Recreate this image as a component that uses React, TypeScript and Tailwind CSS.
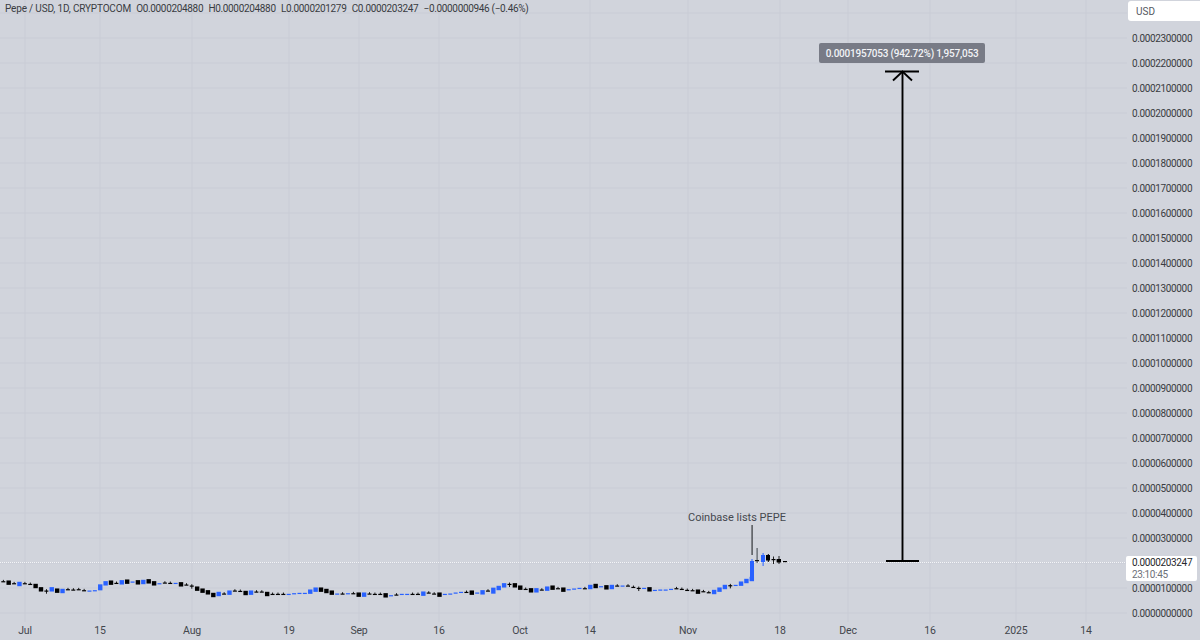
const ticks = [
  { x: 25, label: 'Jul' },
  { x: 100, label: '15' },
  { x: 192, label: 'Aug' },
  { x: 289, label: '19' },
  { x: 359, label: 'Sep' },
  { x: 439, label: '16' },
  { x: 520, label: 'Oct' },
  { x: 590, label: '14' },
  { x: 688, label: 'Nov' },
  { x: 780, label: '18' },
  { x: 848, label: 'Dec' },
  { x: 930, label: '16' },
  { x: 1016, label: '2025' },
  { x: 1086, label: '14' },
];

const prices = Array.from({ length: 24 }, (_, i) => `0.000${String((23 - i) * 100000).padStart(7, '0')}`);

// y in 3x crop units from y=560, K/B = solid square, k/b = thin dash
const series: [number, string][] = [
  [65, 'k'], [68, 'K'], [71, 'k'], [72, 'B'], [71, 'k'], [73, 'k'], [78, 'K'], [88, 'K'], [93, 'w'], [88, 'B'],
  [92, 'K'], [93, 'B'], [89, 'k'], [90, 'k'], [89, 'k'], [92, 'k'], [93, 'b'], [92, 'b'], [82, 'T'], [70, 'B'],
  [68, 'K'], [70, 'k'], [67, 'B'], [65, 'K'], [66, 'b'], [67, 'K'], [66, 'B'], [64, 'K'], [70, 'K'], [71, 'b'],
  [69, 'k'], [70, 'k'], [70, 'b'], [73, 'K'], [75, 'k'], [78, 'w'], [86, 'K'], [92, 'K'], [97, 'K'], [105, 'K'],
  [102, 'B'], [102, 'k'], [98, 'B'], [93, 'k'], [94, 'k'], [99, 'K'], [98, 'B'], [96, 'k'], [96, 'k'], [102, 'K'],
  [103, 'k'], [103, 'k'], [103, 'k'], [103, 'b'], [101, 'b'], [100, 'b'], [100, 'b'], [95, 'B'], [89, 'B'], [89, 'K'],
  [93, 'K'], [98, 'K'], [102, 'b'], [102, 'k'], [101, 'b'],
  [101, 'k'], [104, 'K'], [104, 'B'], [102, 'k'], [103, 'k'], [103, 'k'], [106, 'K'], [107, 'b'], [105, 'k'], [103, 'b'],
  [103, 'b'], [103, 'k'], [103, 'k'], [101, 'B'], [99, 'k'], [102, 'k'], [104, 'K'], [103, 'b'], [102, 'b'], [99, 'b'],
  [97, 'b'], [97, 'k'], [98, 'K'], [99, 'b'], [97, 'B'], [93, 'k'], [92, 'T'], [84, 'B'], [76, 'B'], [73, 'w'],
  [76, 'K'], [83, 'K'], [88, 'k'], [91, 'K'], [91, 'B'], [90, 'k'], [86, 'B'], [83, 'K'], [86, 'k'], [89, 'K'],
  [89, 'b'], [87, 'b'], [85, 'b'], [86, 'k'], [81, 'B'], [78, 'K'], [80, 'b'], [82, 'K'], [81, 'B'], [78, 'k'],
  [78, 'b'], [78, 'k'], [82, 'k'], [85, 'w'], [85, 'b'], [88, 'K'], [91, 'b'], [90, 'b'], [90, 'b'], [88, 'b'],
  [86, 'k'], [88, 'k'], [91, 'k'], [92, 'k'], [95, 'K'],
  [95, 'k'], [98, 'k'], [96, 'B'], [89, 'B'], [81, 'B'], [77, 'w'], [76, 'b'], [71, 'B'], [63, 'B'], [57, 'B'],
];

const step = 5.385;
const x0 = 3.3;

function Candle({ i, v, kind }: { i: number; v: number; kind: string }) {
  const x = x0 + i * step;
  const y = 560 + v / 3;
  const black = kind === 'K' || kind === 'k' || kind === 'w';
  const fill = black ? '#000000' : '#2962ff';
  if (kind === 'K' || kind === 'B') return <rect x={x - 2.2} y={y - 2.2} width={4.4} height={4.4} fill={fill} />;
  if (kind === 'T') return <rect x={x - 2.2} y={y - 3} width={4.4} height={6} fill={fill} />;
  return (
    <g>
      <rect x={x - 2} y={y - 0.5} width={4} height={1.2} fill={fill} />
      {kind !== 'b' && <rect x={x - 0.4} y={y - 1.8} width={0.9} height={kind === 'w' ? 4.5 : 1.8} fill={fill} />}
    </g>
  );
}

function Chart() {
  return (
    <svg width="1127" height="622" className="block">
      {prices.concat('').map((_, i) => (
        <rect key={i} x={0} y={13 + i * 25 - 0.5} width={1127} height={1} fill="#c9ccd5" />
      ))}
      {ticks.map((t) => (
        <rect key={t.x} x={t.x - 0.5} y={0} width={1} height={622} fill="#c9ccd5" />
      ))}
      <line x1={0} y1={562.5} x2={1127} y2={562.5} stroke="#f4f5f8" strokeWidth={1} strokeDasharray="1 1" />
      {series.map(([v, kind], i) => (
        <Candle key={i} i={i} v={v} kind={kind} />
      ))}

      {/* breakout candles */}
      <rect x={751.5} y={559} width={1} height={22} fill="#2962ff" />
      <rect x={750} y={561} width={4} height={17} fill="#2962ff" />
      <rect x={756.5} y={548} width={1.2} height={15} fill="#555a60" />
      <rect x={755} y={560} width={4} height={1.2} fill="#111111" />
      <rect x={762.6} y={553} width={1} height={13} fill="#2962ff" />
      <rect x={761} y={555} width={4} height={7} fill="#2962ff" />
      <rect x={767.8} y={554} width={1} height={8} fill="#000000" />
      <rect x={766} y={555} width={4} height={5.5} fill="#000000" />
      <rect x={773} y={556.5} width={1} height={7.5} fill="#222222" />
      <rect x={771.5} y={559} width={4} height={1.2} fill="#000000" />
      <rect x={778.5} y={556} width={1} height={8} fill="#222222" />
      <rect x={776.6} y={559} width={4.4} height={3.5} fill="#000000" />
      <rect x={783} y={561} width={4} height={1.2} fill="#000000" />

      {/* callout line */}
      <rect x={751.4} y={525} width={1.4} height={30} fill="#4a4d52" />

      {/* measure tool */}
      <path d="M902.5 71.5V561" stroke="#000000" strokeWidth={1.9} fill="none" />
      <path d="M885 71.5H919M886 561H919" stroke="#000000" strokeWidth={1.9} fill="none" />
      <path d="M893 80.5L902.5 71.5L912 80.5" stroke="#000000" strokeWidth={1.9} fill="none" />
    </svg>
  );
}

export default function App() {
  return (
    <div
      className="relative flex h-[640px] w-[1200px] overflow-hidden bg-[#d1d4dc] text-[#3a3c42]"
      style={{ fontFamily: 'Roboto, "Liberation Sans", sans-serif' }}
    >
      <div className="relative flex w-[1127px] flex-col">
        <Chart />
        <div className="flex h-[18px] items-center text-[10.5px] tracking-[-0.2px] text-[#43464c]">
          {ticks.map((t, i) => (
            <span
              key={t.x}
              className="flex w-0 justify-center"
              style={{ marginLeft: i === 0 ? t.x : t.x - ticks[i - 1].x }}
            >
              {t.label}
            </span>
          ))}
        </div>

        <div className="absolute left-[5px] top-[2px] flex gap-[5.2px] text-[10px] leading-[13px] tracking-[-0.33px] text-[#3a3c42]">
          <span className="tracking-[-0.17px]">Pepe / USD, 1D, CRYPTOCOM</span>
          <span>O0.0000204880</span>
          <span>H0.0000204880</span>
          <span>L0.0000201279</span>
          <span>C0.0000203247</span>
          <span>−0.0000000946 (−0.46%)</span>
        </div>

        <div className="absolute left-[688px] top-[511px] text-[11px] leading-[14px] text-[#45484e]">
          Coinbase lists PEPE
        </div>

        <div className="absolute left-[819px] top-[43px] flex h-[20px] w-[166px] items-center justify-center rounded-[2px] bg-[#787b86] text-[10px] font-medium tracking-[-0.23px] text-[#f2f3f6]">
          0.0001957053 (942.72%) 1,957,053
        </div>
      </div>

      <div className="relative flex w-[73px] flex-col pt-px">
        <div className="ml-px flex h-[20px] items-center rounded-l-[3px] bg-white pl-[8px] text-[10px] text-[#55585f]">
          USD
        </div>
        <div className="mt-[4.5px] flex flex-col pl-[5px] text-[10px] tracking-[-0.36px] text-[#3a3c42]">
          {prices.map((p) => (
            <div key={p} className="flex h-[25px] items-center">
              {p}
            </div>
          ))}
        </div>

        <div className="absolute left-[-1px] top-[556px] flex h-[25px] w-[71px] flex-col justify-center rounded-[2px] bg-white pl-[6px] text-[10px] leading-[12px] tracking-[-0.36px]">
          <span className="text-[#26282c]">0.0000203247</span>
          <span className="text-[#6d7078]">23:10:45</span>
        </div>
      </div>
    </div>
  );
}
